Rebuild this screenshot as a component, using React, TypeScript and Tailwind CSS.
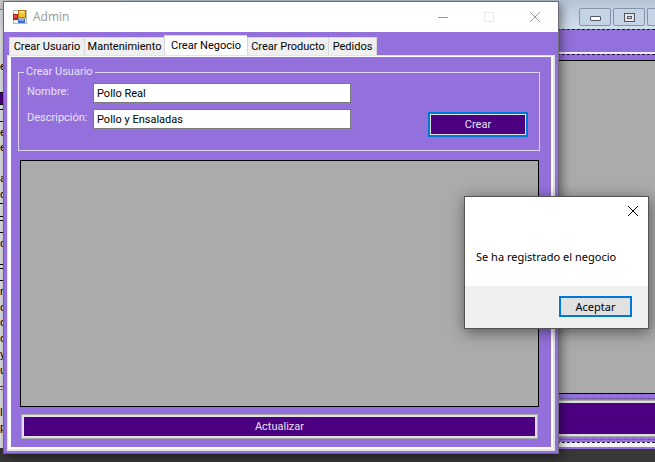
import React from "react";

const ui = "font-['Liberation_Sans_Narrow','Roboto',sans-serif]";

function AppIcon() {
  return (
    <svg width="14" height="14" viewBox="0 0 14 14" shapeRendering="crispEdges" aria-hidden="true">
      <rect x="0" y="0" width="14" height="14" fill="#b9b9b9" />
      <rect x="1" y="1" width="4" height="3" fill="#f6f6f6" />
      <rect x="0" y="4" width="5" height="6" fill="#a52317" />
      <rect x="1" y="5" width="3" height="3" fill="#e24b38" />
      <rect x="1" y="10" width="4" height="3" fill="#f3f3f3" />
      <rect x="5" y="0" width="8" height="8" fill="#b57c12" />
      <rect x="6" y="1" width="6" height="6" fill="#f8c32c" />
      <rect x="7" y="1" width="4" height="2" fill="#ffe58a" />
      <rect x="5" y="9" width="7" height="4" fill="#3a6cc8" />
      <rect x="6" y="9" width="5" height="2" fill="#78aaf4" />
      <rect x="12" y="9" width="1" height="4" fill="#f3f3f3" />
    </svg>
  );
}

function CloseGlyph() {
  return (
    <svg width="10" height="10" viewBox="0 0 10 10" stroke="currentColor" aria-hidden="true">
      <path d="M0 0L10 10M10 0L0 10" />
    </svg>
  );
}

const fragments: { text?: string; row: string }[] = [
  { row: "h-[9px] bg-[#c9c9c9]" },
  { row: "h-[18px] border-t border-[#8a8a8a] bg-[#dfe3e8]" },
  { row: "h-[32px] bg-[#e9eaee]" },
  { row: "h-[16px]", text: "ef" },
  { row: "h-[17px]" },
  { row: "h-[13px] border-y border-black bg-[#4b0082]" },
  { row: "h-[4px]" },
  { row: "h-[13px] border-y border-black" },
  { row: "h-[3px]" },
  { row: "h-[15px]", text: "e" },
  { row: "h-[31px]", text: "ef" },
  { row: "h-[16px]", text: "a" },
  { row: "h-[16px]", text: "d" },
  { row: "h-[14px] border-y border-black" },
  { row: "h-[3px]" },
  { row: "h-[13px] border-y border-black" },
  { row: "h-[3px]" },
  { row: "h-[16px]", text: "d" },
  { row: "h-[13px] border-b border-black" },
  { row: "h-[3px]" },
  { row: "h-[13px] border-y border-black" },
  { row: "h-[3px]" },
  { row: "h-[16px]", text: "n" },
  { row: "h-[15px]", text: "o" },
  { row: "h-[16px]", text: "c" },
  { row: "h-[16px]", text: "o" },
  { row: "h-[16px]", text: "ye" },
  { row: "h-[16px]", text: "u" },
  { row: "h-[11px] border-b border-[#777777]", text: "-" },
  { row: "h-[15px]" },
  { row: "h-[15px]", text: "le" },
  { row: "h-[15px]", text: "p" },
];

function LeftWindow() {
  return (
    <div className="absolute top-0 bottom-[14px] left-0 flex w-[121px] flex-col overflow-hidden bg-[#e9eaee] text-[11px] leading-[15px] text-black">
      {fragments.map((f, i) => (
        <div key={i} className={`shrink-0 ${f.row}`}>
          {f.text}
        </div>
      ))}
    </div>
  );
}

function RightWindow() {
  return (
    <div className="absolute top-0 right-0 bottom-[13px] left-[121px] flex flex-col bg-[#9370db]">
      <div className="flex h-[29px] shrink-0 justify-end gap-[2px] overflow-hidden bg-linear-to-b from-[#b5c5d5] to-[#d3e1ef] pt-2">
        <button aria-label="Minimizar" className="flex h-[18px] w-8 items-center justify-center rounded-[2px] border border-[#8594ac] bg-[#c5d4e4]">
          <span className="mt-[3px] h-[5px] w-[11px] rounded-[1px] border border-[#535666] bg-white" />
        </button>
        <button aria-label="Maximizar" className="flex h-[18px] w-8 items-center justify-center rounded-[2px] border border-[#8594ac] bg-[#c5d4e4]">
          <span className="flex h-[9px] w-[11px] items-center justify-center border border-[#535666] bg-[#e6e6e6]">
            <span className="h-[3px] w-[5px] border border-[#535666]" />
          </span>
        </button>
        <button aria-label="Cerrar" className="h-[18px] w-2 rounded-l-[2px] border border-r-0 border-[#8594ac] bg-[#c5d4e4]" />
      </div>
      <div className="h-[23px] shrink-0 border-t border-dashed border-[#24103f]" />
      <div className="h-[2px] shrink-0 bg-[#f2eefa]" />
      <div className="h-[6px] shrink-0 border-t border-dashed border-[#24103f]" />
      <div className="min-h-0 grow border-y border-black bg-[#ababab]" />
      <div className="h-[7px] shrink-0 pt-1">
        <div className="border-t border-dotted border-[#5c4694]" />
      </div>
      <div className="h-[35px] shrink-0 border-y-2 border-[#dedede] bg-[#4b0082] outline outline-[#a9a9a9]" />
      <div className="flex h-[6px] shrink-0 flex-col justify-center">
        <div className="border-t border-dotted border-[#5c4694]" />
      </div>
      <div className="h-[7px] shrink-0 border-t border-b-2 border-t-[#24103f] border-b-[#9370db] bg-[#f5f5f5] [border-top-style:dashed]" />
    </div>
  );
}

const tabs = [
  { name: "Crear Usuario", size: "w-[75px]" },
  { name: "Mantenimiento", size: "w-[80px]" },
  { name: "Crear Negocio", size: "w-[83px]", active: true },
  { name: "Crear Producto", size: "w-[81px]" },
  { name: "Pedidos", size: "w-[49px]" },
];

function Field({ id, label, value }: { id: string; label: string; value: string }) {
  return (
    <div className="flex h-5">
      <label htmlFor={id} className="w-[66px] shrink-0 leading-[18px] text-[#eae4f8]">
        {label}
      </label>
      <input id={id} defaultValue={value} className="h-5 w-[258px] border border-[#7a7a7a] bg-white px-[3px] text-black outline-none" />
    </div>
  );
}

function AdminWindow() {
  return (
    <div className={`absolute top-px right-[96px] bottom-[8px] left-[3px] flex flex-col border border-[#6d6a78] bg-[#9370db] shadow-[2px_3px_10px_rgba(0,0,0,0.5)] ${ui} text-[11px]`}>
      <header className="flex h-[30px] shrink-0 items-center bg-white pl-[9px] text-[#999999]">
        <AppIcon />
        <h1 className="grow pl-[6px] font-['Open_Sans',sans-serif] text-[12px]">Admin</h1>
        <div className="flex items-center gap-9 pr-[18px]">
          <button aria-label="Minimizar" className="flex h-[10px] w-[10px] items-center">
            <span className="h-px w-full bg-[#999999]" />
          </button>
          <button aria-label="Maximizar" className="h-[10px] w-[10px] border border-[#e8e8e8]" />
          <button aria-label="Cerrar">
            <CloseGlyph />
          </button>
        </div>
      </header>
      <div className="flex min-h-0 grow flex-col px-[3px] pt-[3px] pb-[2px]">
        <div role="tablist" className="flex h-5 shrink-0 items-end pl-[2px] text-black">
          {tabs.map((t) => (
            <button
              key={t.name}
              role="tab"
              aria-selected={!!t.active}
              className={`${t.size} border-t border-l border-[#d9d9d9] text-center leading-[18px] whitespace-nowrap last:border-r ${t.active ? "h-5 bg-white" : "h-[18px] bg-[#f0f0f0]"}`}
            >
              {t.name}
            </button>
          ))}
        </div>
        <main className="flex min-h-0 grow flex-col border border-r-2 border-b-2 border-[#e4e4e4] bg-white pt-px pr-[2px] pb-[2px] pl-[3px]">
          <div className="flex min-h-0 grow flex-col bg-[#9370db] px-[7px] pt-[7px] pb-2">
            <fieldset className="mr-[4px] h-[87px] shrink-0 border border-[#ddd5ee] px-2">
              <legend className="-ml-[3px] px-[2px] leading-4 text-[#eae4f8]">Crear Usuario</legend>
              <div className="flex items-end justify-between pt-[3px]">
                <div className="flex flex-col gap-[6px]">
                  <Field id="nombre" label="Nombre:" value="Pollo Real" />
                  <Field id="descripcion" label="Descripción:" value="Pollo y Ensaladas" />
                </div>
                <button className="mr-[3px] -mb-2 h-[25px] w-[100px] border-2 border-[#0078d7] bg-[#4b0082] pt-px text-[#e8e0f2] inset-ring inset-ring-[#e1e1e1]">
                  Crear
                </button>
              </div>
            </fieldset>
            <div className="mt-[9px] mr-[5px] ml-[2px] min-h-0 grow border border-black bg-[#ababab]" />
            <button className="mt-[7px] mr-[6px] ml-[3px] h-[25px] shrink-0 border border-[#a9a9a9] bg-[#4b0082] pt-px text-[#e8e0f2] inset-ring-2 inset-ring-[#e1e1e1]">
              Actualizar
            </button>
          </div>
        </main>
      </div>
    </div>
  );
}

function MessageDialog() {
  return (
    <div role="dialog" aria-label="Mensaje" className="absolute top-[196px] right-[6px] flex h-[133px] w-[185px] flex-col border border-[#555555] bg-white font-['Noto_Sans',sans-serif] text-[11px] text-black shadow-[1px_3px_14px_rgba(0,0,0,0.5)]">
      <div className="flex justify-end pt-[9px] pr-[10px]">
        <button aria-label="Cerrar">
          <CloseGlyph />
        </button>
      </div>
      <p className="grow pt-[33px] pl-[11px] leading-4 whitespace-nowrap">Se ha registrado el negocio</p>
      <div className="flex h-[42px] shrink-0 items-start justify-end bg-[#f0f0f0] pt-[10px] pr-4">
        <button className="h-[21px] w-[73px] border-2 border-[#0078d7] bg-[#e1e1e1] leading-4">Aceptar</button>
      </div>
    </div>
  );
}

export default function App() {
  return (
    <div className={`relative h-screen min-h-[440px] overflow-hidden bg-[#383838] ${ui}`}>
      <LeftWindow />
      <RightWindow />
      <AdminWindow />
      <MessageDialog />
    </div>
  );
}
